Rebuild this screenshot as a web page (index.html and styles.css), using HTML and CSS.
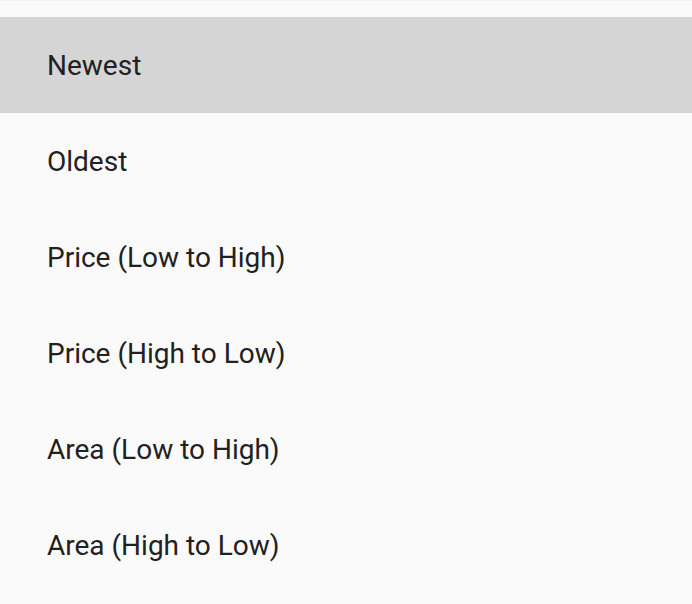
FILE: index.html
```html
<!DOCTYPE html>
<html>
<head>
<meta charset="utf-8">
<link rel="stylesheet" href="styles.css">
</head>
<body>
<ul class="menu">
  <li class="item selected">Newest</li>
  <li class="item">Oldest</li>
  <li class="item">Price (Low to High)</li>
  <li class="item">Price (High to Low)</li>
  <li class="item">Area (Low to High)</li>
  <li class="item">Area (High to Low)</li>
</ul>
</body>
</html>
```
FILE: styles.css
```css
html, body {
  margin: 0;
  padding: 0;
  background: #fafafa;
}
body {
  font-family: Roboto, "Noto Sans", sans-serif;
  border-top: 1px solid #f0f0f0;
}
.menu {
  list-style: none;
  margin: 0;
  padding: 16px 0 0 0;
}
.item {
  height: 96px;
  display: flex;
  align-items: center;
  padding-left: 47px;
  box-sizing: border-box;
  font-size: 28px;
  color: #212121;
}
.selected {
  background: #d5d5d5;
}
```
